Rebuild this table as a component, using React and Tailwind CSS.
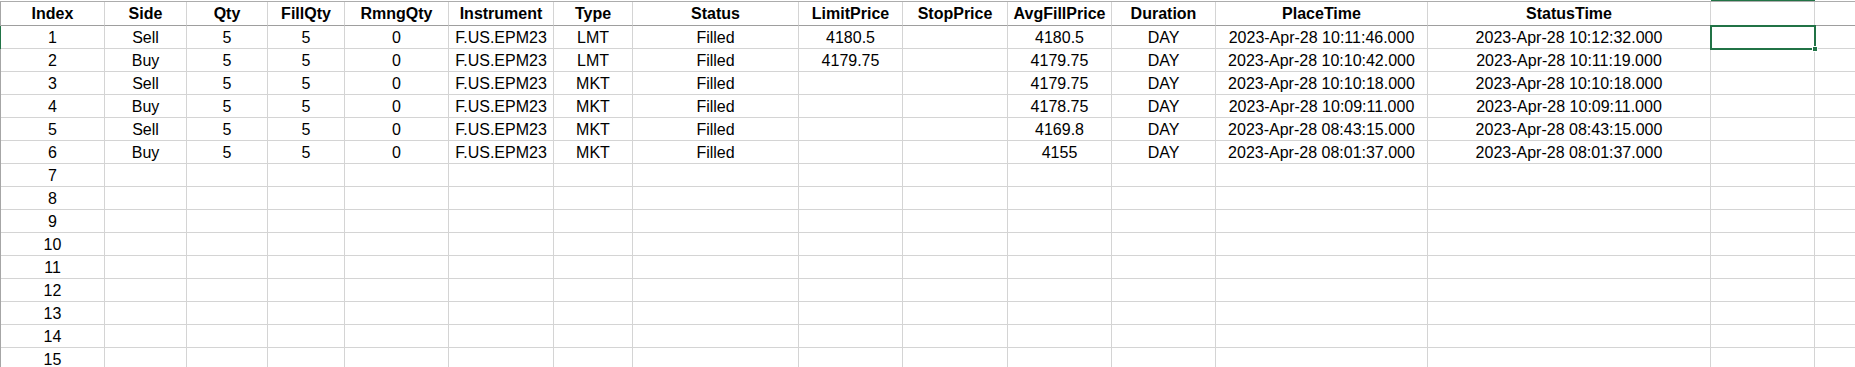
import React from 'react';

const columns = [
  { key: 'index', label: 'Index' },
  { key: 'side', label: 'Side' },
  { key: 'qty', label: 'Qty' },
  { key: 'fillQty', label: 'FillQty' },
  { key: 'rmngQty', label: 'RmngQty' },
  { key: 'instrument', label: 'Instrument' },
  { key: 'type', label: 'Type' },
  { key: 'status', label: 'Status' },
  { key: 'limitPrice', label: 'LimitPrice' },
  { key: 'stopPrice', label: 'StopPrice' },
  { key: 'avgFillPrice', label: 'AvgFillPrice' },
  { key: 'duration', label: 'Duration' },
  { key: 'placeTime', label: 'PlaceTime' },
  { key: 'statusTime', label: 'StatusTime' },
  { key: 'blank1', label: '' },
  { key: 'blank2', label: '' },
];

const orders = [
  { side: 'Sell', limitPrice: '4180.5', type: 'LMT', avgFillPrice: '4180.5', placeTime: '2023-Apr-28 10:11:46.000', statusTime: '2023-Apr-28 10:12:32.000' },
  { side: 'Buy', limitPrice: '4179.75', type: 'LMT', avgFillPrice: '4179.75', placeTime: '2023-Apr-28 10:10:42.000', statusTime: '2023-Apr-28 10:11:19.000' },
  { side: 'Sell', limitPrice: '', type: 'MKT', avgFillPrice: '4179.75', placeTime: '2023-Apr-28 10:10:18.000', statusTime: '2023-Apr-28 10:10:18.000' },
  { side: 'Buy', limitPrice: '', type: 'MKT', avgFillPrice: '4178.75', placeTime: '2023-Apr-28 10:09:11.000', statusTime: '2023-Apr-28 10:09:11.000' },
  { side: 'Sell', limitPrice: '', type: 'MKT', avgFillPrice: '4169.8', placeTime: '2023-Apr-28 08:43:15.000', statusTime: '2023-Apr-28 08:43:15.000' },
  { side: 'Buy', limitPrice: '', type: 'MKT', avgFillPrice: '4155', placeTime: '2023-Apr-28 08:01:37.000', statusTime: '2023-Apr-28 08:01:37.000' },
];

// 15 visible rows, the last one is cut off by the window
const rows = Array.from({ length: 15 }, (_, i) => {
  const o = orders[i];
  if (!o) return { index: String(i + 1) };
  return {
    index: String(i + 1),
    side: o.side,
    qty: '5',
    fillQty: '5',
    rmngQty: '0',
    instrument: 'F.US.EPM23',
    type: o.type,
    status: 'Filled',
    limitPrice: o.limitPrice,
    stopPrice: '',
    avgFillPrice: o.avgFillPrice,
    duration: 'DAY',
    placeTime: o.placeTime,
    statusTime: o.statusTime,
  };
});

const gridCols =
  'grid w-[2000px] grid-cols-[104px_82px_81px_77px_104px_105px_79px_166px_104px_105px_104px_104px_212px_283px_104px_104px]';

const Sheet = () => {
  return (
    <div
      className="h-[367px] w-[1855px] overflow-hidden bg-white text-[16px] text-black"
      style={{ fontFamily: '"Liberation Sans", Arial, sans-serif' }}
    >
      {/* bottom edge of the column letters; selected column is green */}
      <div className={`${gridCols} h-[2px] border-b border-[#acacac] pl-px`}>
        {columns.map((col) => (
          <div key={col.key} className={col.key === 'blank1' ? 'bg-[#217346]' : ''} />
        ))}
      </div>

      {/* Header row */}
      <div className={`${gridCols} border-l border-[#a6a6a6]`}>
        {columns.map((col) => (
          <div
            key={col.key}
            className="flex h-[24px] items-center justify-center border-r border-b border-r-[#d4d4d4] border-b-[#9e9e9e] font-bold"
          >
            {col.label}
          </div>
        ))}
      </div>

      {/* Data rows */}
      {rows.map((row, r) => (
        <div
          key={r}
          className={`${gridCols} border-l ${r === 0 ? 'border-[#217346]' : 'border-[#a6a6a6]'}`}
        >
          {columns.map((col) => {
            const active = r === 0 && col.key === 'blank1';
            return (
              <div
                key={col.key}
                className={`relative flex h-[23px] items-center justify-center whitespace-nowrap border-r border-b border-[#d4d4d4] pt-px ${
                  active ? 'z-10 outline-2 -outline-offset-1 outline-[#217346]' : ''
                }`}
              >
                {row[col.key] || ''}
                {active && (
                  <span className="absolute -bottom-[4px] -right-[4px] h-[6px] w-[6px] border border-white bg-[#217346]" />
                )}
              </div>
            );
          })}
        </div>
      ))}
    </div>
  );
};

export default function App() {
  return <Sheet />;
}
